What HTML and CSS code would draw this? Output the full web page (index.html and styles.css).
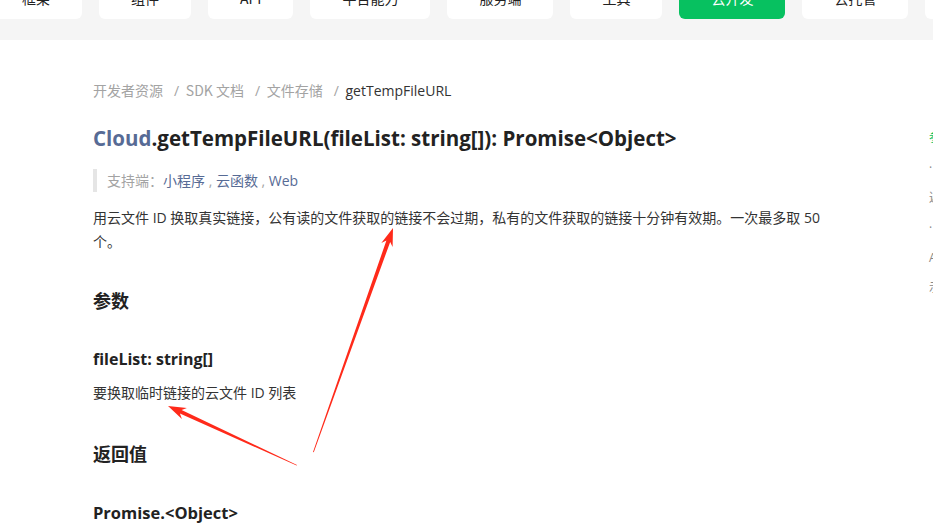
FILE: index.html
```html
<!DOCTYPE html>
<html lang="zh-CN">
<head>
    <meta charset="UTF-8">
    <title>Cloud.getTempFileURL</title>
    <link rel="stylesheet" href="styles.css">
</head>
<body>
    <div class="topbar">
        <div class="tabs">
            <div class="tab">框架</div>
            <div class="tab">组件</div>
            <div class="tab">API</div>
            <div class="tab">平台能力</div>
            <div class="tab">服务端</div>
            <div class="tab">工具</div>
            <div class="tab active">云开发</div>
            <div class="tab">云托管</div>
            <div class="tab">其他</div>
        </div>
    </div>

    <div class="main">
        <div class="doc">
            <div class="crumbs">
                <span class="crumb">开发者资源</span><span class="sep">/</span>
                <span class="crumb">SDK 文档</span><span class="sep">/</span>
                <span class="crumb">文件存储</span><span class="sep">/</span>
                <span class="current">getTempFileURL</span>
            </div>

            <h1 class="title"><span class="cls">Cloud</span>.getTempFileURL(fileList: string[]): Promise&lt;Object&gt;</h1>

            <div class="support">支持端：<span class="link">小程序</span> , <span class="link">云函数</span> , <span class="link">Web</span></div>

            <p class="desc">用云文件 ID 换取真实链接，公有读的文件获取的链接不会过期，私有的文件获取的链接十分钟有效期。一次最多取 50 个。</p>

            <h2 class="section">参数</h2>
            <h3 class="param">fileList: string[]</h3>
            <p class="param-desc">要换取临时链接的云文件 ID 列表</p>

            <h2 class="section returns">返回值</h2>
            <h3 class="param last">Promise.&lt;Object&gt;</h3>
        </div>

        <div class="toc">
            <div class="toc-item on">参数</div>
            <div class="toc-item">· fileList</div>
            <div class="toc-item">返回值</div>
            <div class="toc-item">· fileList</div>
            <div class="toc-item">API</div>
            <div class="toc-item">示例</div>
        </div>
    </div>

    <!-- red arrows drawn over the page -->
    <svg class="marks" width="933" height="527" viewBox="0 0 933 527">
        <polygon fill="#ff2a1a" points="313,452 386.4,240.5 381.3,242.9 393,228 392.6,247 390.2,241.9 313.8,452.2"/>
        <polygon fill="#ff2a1a" points="297,465 181.6,410 186.9,408 168,406 181.9,419 179.9,413.6 296.6,465.6"/>
    </svg>
</body>
</html>
```

FILE: styles.css
```css
body {
    margin: 0;
    font-family: "Open Sans", "Noto Sans CJK SC", sans-serif;
    color: #333;
    background-color: #fff;
    overflow: hidden;
    position: relative;
}

.topbar {
    height: 40px;
    background-color: #f5f5f5;
    overflow: hidden;
}

.tabs {
    display: flex;
    gap: 17px;
    margin-left: -10px;
    margin-top: -20px;
}

.tab {
    flex-shrink: 0;
    height: 39px;
    line-height: 37px;
    padding: 0 32px;
    background-color: #fff;
    border-radius: 6px;
    font-size: 14px;
    color: #222;
    font-family: "Noto Sans CJK SC", sans-serif;
}

.tab.active {
    background-color: #07c160;
    color: #fff;
}

.main {
    display: flex;
}

.doc {
    width: 740px;
    flex-shrink: 0;
    padding-left: 93px;
    padding-top: 39px;
}

.crumbs {
    font-size: 14px;
    line-height: 22px;
    color: #a3a3a3;
}

.crumb {
    font-family: "Noto Sans CJK SC", sans-serif;
}

.sep {
    margin: 0 3px 0 11px;
}

.current {
    color: #333;
}

.title {
    margin: 22px 0 0;
    font-size: 20.5px;
    line-height: 28px;
    font-weight: 700;
    color: #222;
}

.cls {
    color: #576b95;
}

.support {
    margin-top: 17px;
    border-left: 4px solid #e5e5e5;
    padding-left: 10px;
    height: 23px;
    line-height: 23px;
    font-size: 14px;
    color: #a3a3a3;
}

.link {
    color: #576b95;
}

.desc {
    margin: 14px 0 0;
    font-size: 14px;
    line-height: 24px;
    color: #333;
}

.section {
    margin: 34px 0 0;
    font-size: 18px;
    line-height: 26px;
    font-weight: 700;
    color: #222;
}

.param {
    margin: 33px 0 0;
    font-size: 16px;
    line-height: 24px;
    font-weight: 700;
    color: #222;
}

.param.last {
    margin-top: 34px;
    font-size: 16.5px;
}

.param-desc {
    margin: 11px 0 0;
    font-size: 14px;
    line-height: 22px;
    color: #333;
}

.section.returns {
    margin-top: 37px;
}

.toc {
    margin-left: 96px;
    padding-top: 83px;
    font-size: 12px;
    color: #888;
    white-space: nowrap;
}

.toc-item {
    line-height: 30px;
}

.toc-item.on {
    color: #07c160;
}

.marks {
    position: absolute;
    left: 0;
    top: 0;
    pointer-events: none;
}
```
